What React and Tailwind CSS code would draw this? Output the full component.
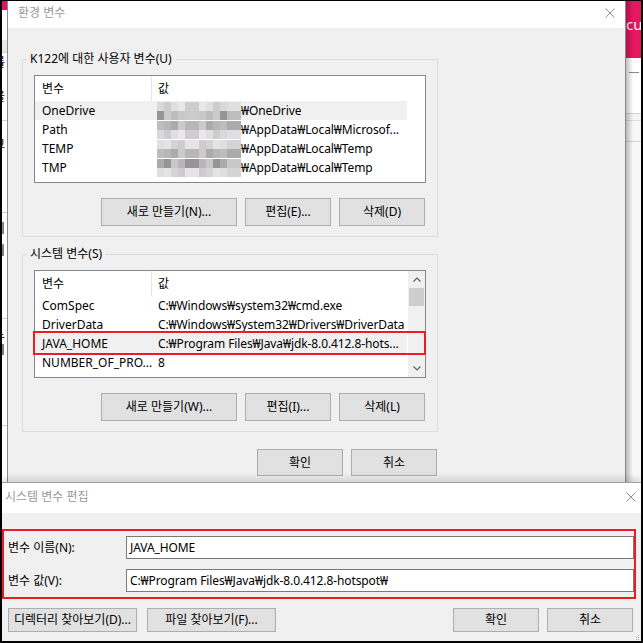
import React from 'react';

// mosaic colours for the blurred user-name part of the paths
const GRAYS = ['#d9d9d9', '#c8c8c8', '#e4e4e4', '#ababab', '#cfcbd0', '#bdbdbd', '#e8e8e8', '#959595', '#d4d4d4', '#b8b6bb', '#dfdee0', '#cbcbcb'];

function Mosaic({ seed }) {
  const cells = [];
  for (let s = 0; s < 2; s++) {
    for (let c = 0; c < 12; c++) {
      cells.push(GRAYS[(seed * 5 + s * 7 + c * 3 + c * c) % GRAYS.length]);
    }
  }
  return (
    <div className="grid grid-cols-[repeat(12,7px)] grid-rows-[repeat(2,9px)] shrink-0 -ml-[1px]">
      {cells.map((bg, i) => (
        <div key={i} style={{ backgroundColor: bg }} />
      ))}
    </div>
  );
}

function CloseX() {
  return (
    <svg width="10" height="10" viewBox="0 0 10 10" className="shrink-0">
      <path d="M0.5 0.5 L9.5 9.5 M9.5 0.5 L0.5 9.5" stroke="#8f8f8f" strokeWidth="1" fill="none" />
    </svg>
  );
}

function Btn({ children, className }) {
  return (
    <button className={`${className} shrink-0 bg-[#e1e1e1] border border-[#adadad] text-[12px] leading-[16px] text-black flex items-center justify-center`}>
      {children}
    </button>
  );
}

function ListHeader() {
  return (
    <div className="flex h-[25px] items-center shrink-0">
      <div className="w-[117px] h-full border-r border-[#e5e5e5] pl-[7px] flex items-center">변수</div>
      <div className="pl-[6px]">값</div>
    </div>
  );
}

function Row({ name, value, active, mosaic }) {
  return (
    <div className={`flex h-[19px] w-[372px] items-center shrink-0 ${active ? 'bg-[#f0f0f0]' : ''}`}>
      <div className="w-[117px] shrink-0 pl-[7px] whitespace-nowrap overflow-hidden">{name}</div>
      <div className="flex items-center pl-[6px] whitespace-nowrap overflow-hidden tracking-[-0.1px]">
        {mosaic !== undefined && <Mosaic seed={mosaic} />}
        <span>{value}</span>
      </div>
    </div>
  );
}

function Chevron({ down }) {
  return (
    <svg width="8" height="5" viewBox="0 0 8 5">
      <path d={down ? 'M0.5 0.5 L4 4 L7.5 0.5' : 'M0.5 4.5 L4 1 L7.5 4.5'} stroke="#606060" strokeWidth="1.2" fill="none" />
    </svg>
  );
}

function LeftStrip() {
  return (
    <div className="w-[5px] h-[481px] overflow-hidden bg-white flex flex-col text-[12px] leading-[13px] text-black">
      <div className="h-[9px] bg-[#d81b60] shrink-0" />
      <div className="h-[30px] shrink-0" />
      <div className="h-[12px] bg-[#e8e8e8] shrink-0" />
      <div className="h-px bg-[#d0d0d0] shrink-0" />
      <div className="mt-[3px] h-[13px] -ml-[8px] shrink-0">를</div>
      <div className="mt-[21px] h-[13px] -ml-[8px] shrink-0">을</div>
      <div className="mt-[17px] h-px bg-[#d0d0d0] shrink-0" />
      <div className="mt-[17px] h-[13px] -ml-[8px] shrink-0">고</div>
      <div className="mt-[61px] h-px bg-[#d0d0d0] shrink-0" />
      <div className="mt-[9px] h-[13px] -ml-[8px] shrink-0">피</div>
      <div className="mt-[9px] h-[13px] -ml-[8px] shrink-0">되</div>
      <div className="mt-[61px] h-px bg-[#d0d0d0] shrink-0" />
      <div className="mt-[9px] h-[13px] -ml-[8px] shrink-0">뇨</div>
      <div className="mt-[2px] h-[13px] -ml-[8px] shrink-0">시</div>
      <div className="mt-[69px] h-px bg-[#d0d0d0] shrink-0" />
    </div>
  );
}

function RightStrip() {
  return (
    <div className="relative w-[15px] h-[481px] overflow-hidden bg-[#f8f8f8] flex flex-col">
      <div className="h-[57px] shrink-0 bg-[#e5175f] text-white text-[15px] leading-[16px] pt-[15px] whitespace-nowrap">cu</div>
      <div className="h-[55px] shrink-0 bg-white">
        <div className="mt-[14px] ml-[3px] w-[10px] h-px bg-[#8a8a8a]" />
      </div>
      <div className="h-px bg-[#d4d4d4] shrink-0" />
      <div className="h-[6px] bg-[#f4f4f4] shrink-0" />
      <div className="h-px bg-[#dcdcdc] shrink-0" />
      <div className="h-[20px] bg-[#f7f7f7] shrink-0" />
      <div className="h-px bg-[#d4d4d4] shrink-0" />
      <div className="absolute left-0 top-0 bottom-0 w-[7px] bg-linear-to-r from-black/25 to-transparent" />
    </div>
  );
}

function EnvDialog() {
  return (
    <div className="w-[619px] h-[481px] border-x border-[#8a8a8a] bg-[#f0f0f0] flex flex-col">
      <div className="h-[27px] shrink-0 bg-white flex items-center justify-between pl-[10px] pr-[10px] pb-[3px]">
        <span className="text-[12px] leading-[16px] text-[#9a9a9a]">환경 변수</span>
        <CloseX />
      </div>

      <div className="ml-[14px] w-[416px]">
        <fieldset className="mt-[23px] border border-[#dcdcdc] pb-[10px]">
          <legend className="ml-[4px] px-[3px] text-[12px] leading-[16px]">K122에 대한 사용자 변수(U)</legend>
          <div className="mx-[11px] mt-[8px] h-[108px] border border-[#828790] bg-white flex flex-col overflow-hidden">
            <ListHeader />
            <Row name="OneDrive" value="₩OneDrive" mosaic={0} active />
            <Row name="Path" value="₩AppData₩Local₩Microsof..." mosaic={1} />
            <Row name="TEMP" value="₩AppData₩Local₩Temp" mosaic={2} />
            <Row name="TMP" value="₩AppData₩Local₩Temp" mosaic={3} />
          </div>
          <div className="mt-[15px] flex justify-end gap-[8px] pr-[12px]">
            <Btn className="w-[136px] h-[28px]">새로 만들기(N)...</Btn>
            <Btn className="w-[86px] h-[28px]">편집(E)...</Btn>
            <Btn className="w-[86px] h-[28px]">삭제(D)</Btn>
          </div>
        </fieldset>

        <fieldset className="mt-[9px] border border-[#dcdcdc] pb-[10px]">
          <legend className="ml-[4px] px-[3px] text-[12px] leading-[16px]">시스템 변수(S)</legend>
          <div className="relative mx-[11px] mt-[8px]">
            <div className="h-[108px] border border-[#828790] bg-white flex overflow-hidden">
              <div className="w-[373px] flex flex-col overflow-hidden">
                <ListHeader />
                <Row name="ComSpec" value="C:₩Windows₩system32₩cmd.exe" />
                <Row name="DriverData" value="C:₩Windows₩System32₩Drivers₩DriverData" />
                <Row name="JAVA_HOME" value="C:₩Program Files₩Java₩jdk-8.0.412.8-hots..." active />
                <Row name="NUMBER_OF_PRO..." value="8" />
              </div>
              <div className="w-[17px] bg-[#f0f0f0] flex flex-col">
                <div className="h-[17px] flex items-center justify-center">
                  <Chevron />
                </div>
                <div className="h-[18px] mx-[1px] bg-[#cdcdcd]" />
                <div className="flex-1" />
                <div className="h-[17px] flex items-center justify-center">
                  <Chevron down />
                </div>
              </div>
            </div>
            <div className="absolute left-[-1px] top-[61px] w-[393px] h-[24px] border-2 border-[#ed1c24]" />
          </div>
          <div className="mt-[15px] flex justify-end gap-[8px] pr-[12px]">
            <Btn className="w-[136px] h-[28px]">새로 만들기(W)...</Btn>
            <Btn className="w-[86px] h-[28px]">편집(I)...</Btn>
            <Btn className="w-[86px] h-[28px]">삭제(L)</Btn>
          </div>
        </fieldset>

        <div className="mt-[17px] flex justify-end gap-[8px] pr-[1px]">
          <Btn className="w-[86px] h-[27px]">확인</Btn>
          <Btn className="w-[86px] h-[27px]">취소</Btn>
        </div>
      </div>
    </div>
  );
}

function Field({ label, value }) {
  return (
    <div className="flex items-center h-[23px]">
      <div className="w-[122px] pl-[4px] shrink-0">{label}</div>
      <div className="w-[508px] h-[23px] border border-[#7a7a7a] bg-white pl-[3px] flex items-center whitespace-nowrap overflow-hidden tracking-[-0.1px]">
        {value}
      </div>
    </div>
  );
}

function EditDialog() {
  return (
    <div className="relative h-[159px] bg-[#f0f0f0] border-t border-[#a0a0a0] shadow-[0_-4px_6px_rgba(0,0,0,0.12)] text-[12px] leading-[16px]">
      <div className="h-[30px] bg-white flex items-center justify-between pl-[3px] pr-[5px] pb-[3px]">
        <span className="text-[#9a9a9a]">시스템 변수 편집</span>
        <CloseX />
      </div>
      <div className="mt-[16px] w-[634px] h-[70px] border-2 border-[#ed1c24] pt-[5px] flex flex-col gap-[10px]">
        <Field label="변수 이름(N):" value="JAVA_HOME" />
        <Field label="변수 값(V):" value="C:₩Program Files₩Java₩jdk-8.0.412.8-hotspot₩" />
      </div>
      <div className="mt-[9px] flex justify-between pl-[6px] pr-[8px]">
        <div className="flex gap-[10px]">
          <Btn className="w-[129px] h-[24px]">디렉터리 찾아보기(D)...</Btn>
          <Btn className="w-[129px] h-[24px]">파일 찾아보기(F)...</Btn>
        </div>
        <div className="flex gap-[8px]">
          <Btn className="w-[86px] h-[24px]">확인</Btn>
          <Btn className="w-[86px] h-[24px]">취소</Btn>
        </div>
      </div>
      <svg width="5" height="5" viewBox="0 0 5 5" className="absolute right-[1px] bottom-[1px]">
        <rect x="3" y="0" width="1" height="1" fill="#b0b0b0" />
        <rect x="1" y="2" width="1" height="1" fill="#b0b0b0" />
        <rect x="3" y="2" width="1" height="1" fill="#b0b0b0" />
        <rect x="3" y="4" width="1" height="1" fill="#b0b0b0" />
        <rect x="1" y="4" width="1" height="1" fill="#b0b0b0" />
      </svg>
    </div>
  );
}

export default function App() {
  return (
    <div className="w-[643px] h-[643px] overflow-hidden bg-white border-t border-x-2 border-b-2 border-black flex flex-col text-[12px] leading-[16px] text-black font-['Noto_Sans','Noto_Sans_CJK_KR',sans-serif]">
      <div className="flex h-[481px] shrink-0">
        <LeftStrip />
        <EnvDialog />
        <RightStrip />
      </div>
      <EditDialog />
    </div>
  );
}
